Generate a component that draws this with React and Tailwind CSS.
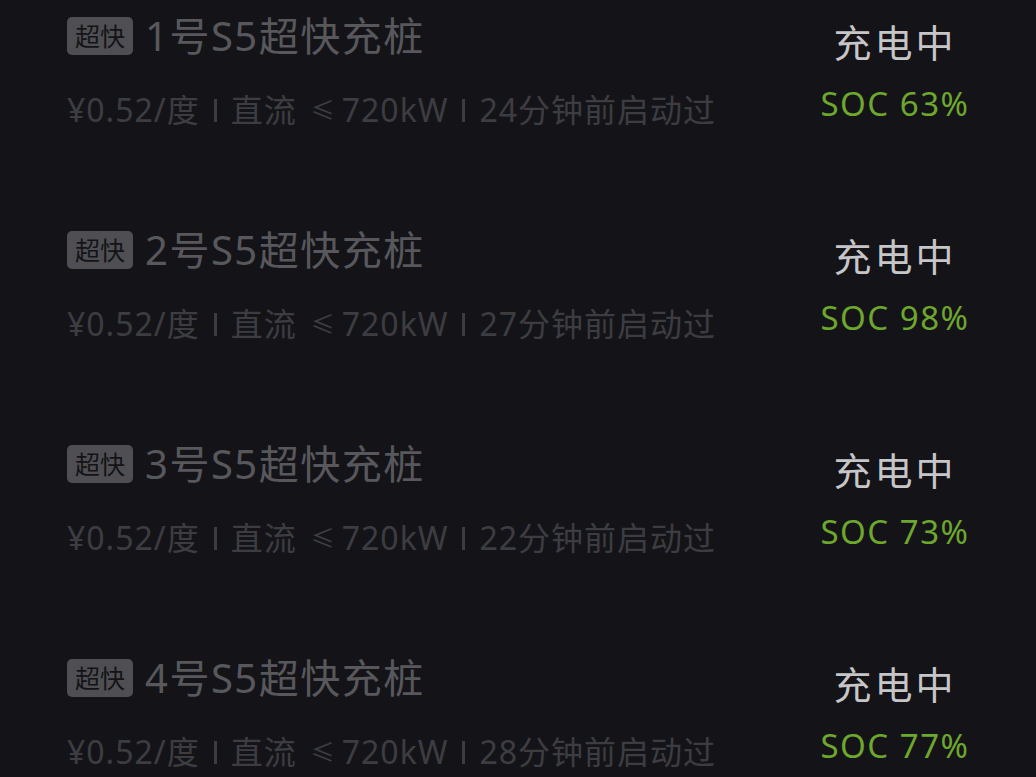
import React from 'react';

const piles = [
    { no: 1, ago: 24, soc: 63 },
    { no: 2, ago: 27, soc: 98 },
    { no: 3, ago: 22, soc: 73 },
    { no: 4, ago: 28, soc: 77 },
];

const font = { fontFamily: '"Noto Sans", "Noto Sans CJK SC", sans-serif' };

const Bar = () => <span className="mx-[14px] h-[23px] w-[3px] bg-[#3d3d41]" />;

const PileRow = ({ no, ago, soc }) => (
    <div className="flex h-[214px] items-start justify-between pl-[67px] pr-[61px]">
        <div className="pt-[14px]">
            <div className="flex items-center">
                <span className="flex h-[38px] items-center rounded-[5px] bg-[#4f4f53] px-[8px] text-[25px] leading-none text-[#141417]">
                    超快
                </span>
                <span className="ml-[12px] text-[40px] leading-[44px] tracking-[1.5px] text-[#58585c]">{no}号S5超快充桩</span>
            </div>
            <div className="mt-[32px] flex items-center text-[32px] leading-[40px] tracking-[1px] text-[#3d3d41]">
                <span>¥0.52/度</span>
                <Bar />
                <span>直流</span>
                <span className="ml-[14px] mr-[6px] text-[24px]">≤</span>
                <span>720kW</span>
                <Bar />
                <span>{ago}分钟前启动过</span>
            </div>
        </div>
        <div className="flex w-[160px] flex-col items-center pt-[18px]">
            <span className="text-[38px] leading-[48px] tracking-[3px] text-[#c6c6c8]">充电中</span>
            <span className="mt-[18px] text-[33px] leading-[40px] tracking-[1.5px] text-[#6ea72d]">SOC {soc}%</span>
        </div>
    </div>
);

export default function App() {
    return (
        <div className="h-[777px] w-[1036px] overflow-hidden bg-[#141418]" style={font}>
            {piles.map((p) => (
                <PileRow key={p.no} {...p} />
            ))}
        </div>
    );
}
